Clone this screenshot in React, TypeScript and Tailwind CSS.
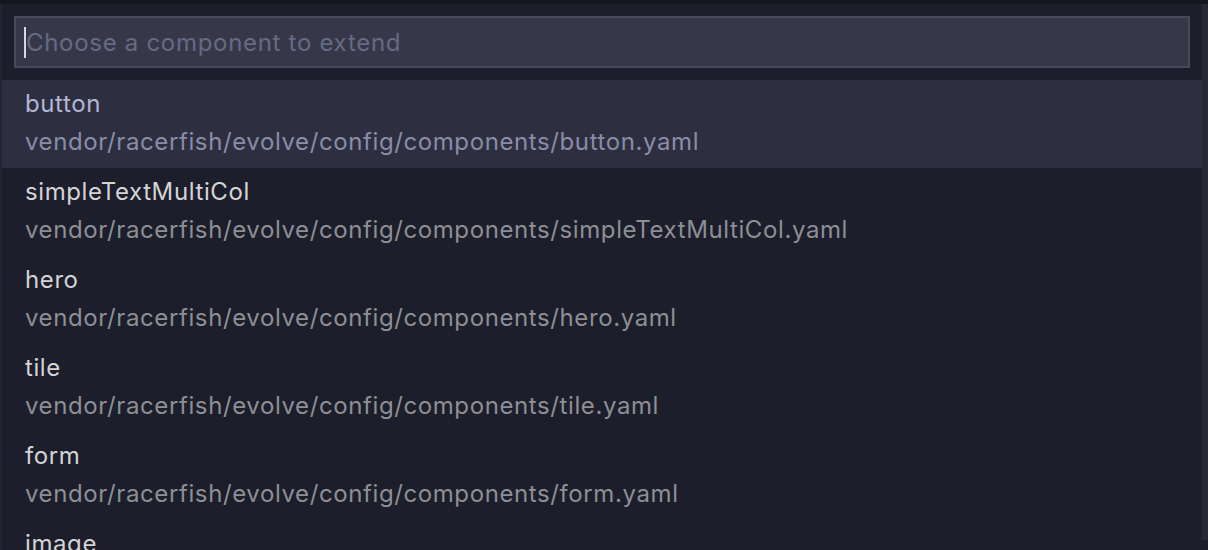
import React from 'react';

const items = [
  'button',
  'simpleTextMultiCol',
  'hero',
  'tile',
  'form',
  'image',
];

export default function App() {
  return (
    <div
      className="h-[550px] w-[1208px] overflow-hidden bg-[#1c1e2b] border-t-4 border-[#14151e] flex"
      style={{ fontFamily: 'Inter, "Noto Sans", sans-serif' }}
    >
      <div className="w-[2px] bg-[#232533]" />
      <div className="flex-1 flex flex-col">
        <div className="pl-3 pr-3 pt-3 pb-3">
          <div className="h-[52px] border-2 border-[#474a5b] bg-[#363849] flex items-center pl-[8px]">
            <div className="w-[2px] h-[31px] bg-[#d8d8e0]" />
            <span className="text-[24px] tracking-[0.7px] text-[#676a82] leading-none pt-[2px]">
              Choose a component to extend
            </span>
          </div>
        </div>
        {items.map((name, i) => (
          <div
            key={name}
            className={
              'h-[88px] shrink-0 pl-[23px] pt-[11px] flex flex-col tracking-[0.6px] ' +
              (i === 0 ? 'bg-[#2d2f40]' : '')
            }
          >
            <span
              className={
                'text-[24px] leading-[26px] ' + (i === 0 ? 'text-[#b4b6d5]' : 'text-[#d4d4d6]')
              }
            >
              {name}
            </span>
            <span
              className={
                'text-[24px] leading-[26px] mt-[12px] ' + (i === 0 ? 'text-[#8a8ca8]' : 'text-[#8e8f95]')
              }
            >
              vendor/racerfish/evolve/config/components/{name}.yaml
            </span>
          </div>
        ))}
      </div>
      <div className="w-[6px] bg-[#262836] mb-[10px]" />
    </div>
  );
}
